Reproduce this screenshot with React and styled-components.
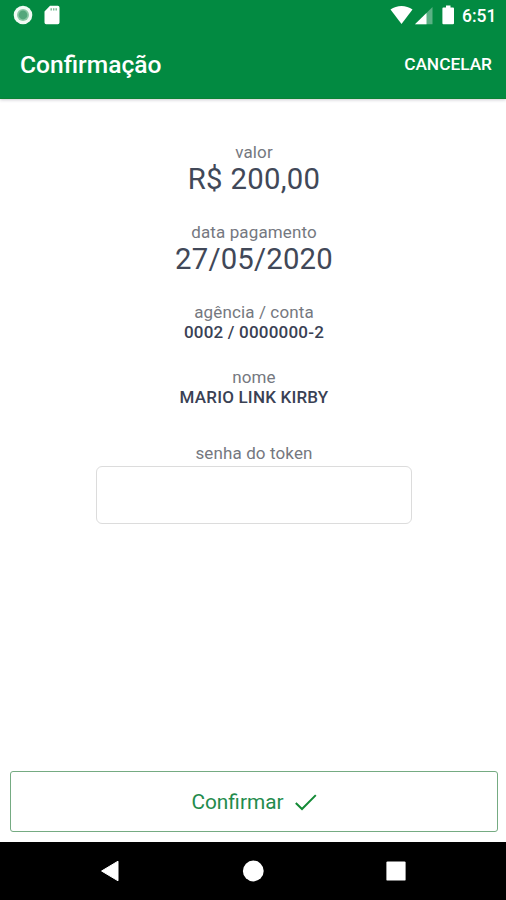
import React, { useState } from "react";
import styled, { createGlobalStyle } from "styled-components";

const App = () => {
  const [token, setToken] = useState("");

  return (
    <>
      <GlobalStyle />
      <Screen>
        <Header>
          <StatusBar>
            <StatusGroup>
              <SyncIcon />
              <SdCardIcon />
            </StatusGroup>
            <StatusGroup>
              <SignalIcons />
              <Clock>6:51</Clock>
            </StatusGroup>
          </StatusBar>
          <Toolbar>
            <Title>Confirmação</Title>
            <CancelButton>CANCELAR</CancelButton>
          </Toolbar>
        </Header>

        <Content>
          <Field $gap={26}>
            <Label>valor</Label>
            <BigValue $spacing={0.3}>R$ 200,00</BigValue>
          </Field>
          <Field $gap={26}>
            <Label>data pagamento</Label>
            <BigValue $spacing={0.2}>27/05/2020</BigValue>
          </Field>
          <Field $gap={25}>
            <Label>agência / conta</Label>
            <Value>0002 / 0000000-2</Value>
          </Field>
          <Field $gap={36}>
            <Label>nome</Label>
            <Value>MARIO LINK KIRBY</Value>
          </Field>
          <Field $gap={0}>
            <Label as="label" htmlFor="token">
              senha do token
            </Label>
            <TokenInput
              id="token"
              type="password"
              value={token}
              onChange={(e) => setToken(e.target.value)}
            />
          </Field>
        </Content>

        <Footer>
          <ConfirmButton>
            <span>Confirmar</span>
            <CheckIcon />
          </ConfirmButton>
        </Footer>

        <NavBar>
          <NavButton aria-label="voltar">
            <svg width="20" height="24" viewBox="0 0 20 24">
              <path
                d="M1.6 12 18 2.2v19.6z"
                fill="#fff"
                stroke="#fff"
                strokeLinejoin="round"
              />
            </svg>
          </NavButton>
          <NavButton aria-label="início">
            <svg width="22" height="22" viewBox="0 0 22 22">
              <circle cx="11.3" cy="11" r="10.4" fill="#fff" />
            </svg>
          </NavButton>
          <NavButton aria-label="recentes">
            <svg width="20" height="20" viewBox="0 0 20 20">
              <rect x="0.4" y="0.4" width="19.2" height="19.2" rx="1.2" fill="#fff" />
            </svg>
          </NavButton>
        </NavBar>
      </Screen>
    </>
  );
};

const SyncIcon = () => (
  <svg width="20" height="20" viewBox="0 0 20 20">
    <circle cx="10" cy="10" r="9.3" fill="#f1faf4" />
    <circle cx="10" cy="10" r="6" fill="#8cc9a6" />
    <circle cx="10" cy="10" r="4.4" fill="#54a77c" />
  </svg>
);

const SdCardIcon = () => (
  <svg width="16" height="20" viewBox="0 0 16 20">
    <path
      d="M6 .8h7.8a1.7 1.7 0 0 1 1.7 1.7v15a1.7 1.7 0 0 1-1.7 1.7H2.200a1.700 1.700 0 0 1-1.700-1.700V6.500z"
      fill="#fff"
    />
    <path d="M7.2 3.2v2.400M9.700 3.200v2.400M12.200 3.200v2.400" stroke="#7cbd97" strokeWidth="1.5" />
  </svg>
);

const SignalIcons = () => (
  <svg width="65" height="20" viewBox="0 0 65 20">
    <path d="M.5 4.400C6.800-.3 16.200-.3 22.500 4.400L11.500 18.900z" fill="#fff" />
    <path d="M42.500 2v17.200H25z" fill="#5bb184" />
    <path d="M36.500 7.900v11.300H25z" fill="#fff" />
    <path
      d="M56 .6h4.500v2H63a1 1 0 0 1 1 1v14.600a1 1 0 0 1-1 1h-9.600a1 1 0 0 1-1-1V3.600a1 1 0 0 1 1-1H56z"
      fill="#fff"
    />
  </svg>
);

const CheckIcon = () => (
  <svg width="22" height="18" viewBox="0 0 22 18">
    <path d="M.8 10 7 16 20.800 2.100" fill="none" stroke="#148a36" strokeWidth="2" />
  </svg>
);

const GlobalStyle = createGlobalStyle`
  * {
    box-sizing: border-box;
  }
  body {
    margin: 0;
    background: #ffffff;
    font-family: Roboto, sans-serif;
  }
  svg {
    display: block;
    flex-shrink: 0;
  }
`;

const Screen = styled.div`
  display: flex;
  flex-direction: column;
  width: 506px;
  height: 900px;
  overflow: hidden;
  background: #ffffff;
`;

const Header = styled.header`
  height: 99px;
  color: #ffffff;
  background: #028a41;
  border-bottom: 1px solid #0a8233;
  box-shadow: 0 1px 3px rgba(60, 50, 80, 0.25);
`;

const StatusBar = styled.div`
  display: flex;
  justify-content: space-between;
  height: 32px;
  padding: 5px 9.5px 0 13px;
`;

const StatusGroup = styled.div`
  display: flex;
  align-items: flex-start;
  gap: 11px;
`;

const Clock = styled.span`
  margin-left: -4px;
  font-size: 17.5px;
  font-weight: 500;
  line-height: 22px;
`;

const Toolbar = styled.div`
  display: flex;
  align-items: center;
  justify-content: space-between;
  height: 65px;
  padding: 0 14px 0 20px;
`;

const Title = styled.h1`
  margin: 0;
  font-size: 24.6px;
  font-weight: 500;
  line-height: 30px;
`;

const CancelButton = styled.button`
  padding: 0 0 1px;
  border: none;
  background: none;
  color: #ffffff;
  font-family: inherit;
  font-size: 17.3px;
  font-weight: 500;
  line-height: 20px;
`;

const Content = styled.main`
  display: flex;
  flex: 1;
  flex-direction: column;
  align-items: center;
  padding: 43px 0 0 2px;
`;

const Field = styled.div`
  display: flex;
  flex-direction: column;
  align-items: center;
  margin-bottom: ${(props) => props.$gap}px;
`;

const Label = styled.span`
  color: #757880;
  font-size: 17px;
  line-height: 20px;
  letter-spacing: 0.12px;
`;

const Value = styled.strong`
  color: #3a4154;
  font-size: 17px;
  font-weight: 500;
  line-height: 20px;
  letter-spacing: 0.2px;
`;

const BigValue = styled.span`
  color: #414858;
  font-size: 29.3px;
  line-height: 34px;
  letter-spacing: ${(props) => props.$spacing}px;
`;

const TokenInput = styled.input`
  width: 316px;
  height: 58px;
  margin-top: 3px;
  padding: 0 16px;
  border: 1.5px solid #dcdcdc;
  border-radius: 6px;
  outline: none;
  background: #ffffff;
  font-family: inherit;
  font-size: 20px;
  text-align: center;
`;

const Footer = styled.footer`
  padding: 0 8px 10px 10px;
`;

const ConfirmButton = styled.button`
  display: flex;
  align-items: center;
  justify-content: center;
  gap: 11px;
  width: 100%;
  height: 61px;
  padding: 0;
  border: 1px solid #75ab82;
  border-radius: 3px;
  background: #ffffff;
  color: #238b4c;
  font-family: inherit;
  font-size: 20.8px;
`;

const NavBar = styled.nav`
  display: flex;
  justify-content: center;
  gap: 121px;
  height: 58px;
  background: #000000;
`;

const NavButton = styled.button`
  display: flex;
  align-items: center;
  justify-content: center;
  width: 22px;
  padding: 0;
  border: none;
  background: none;
`;

export default App;
